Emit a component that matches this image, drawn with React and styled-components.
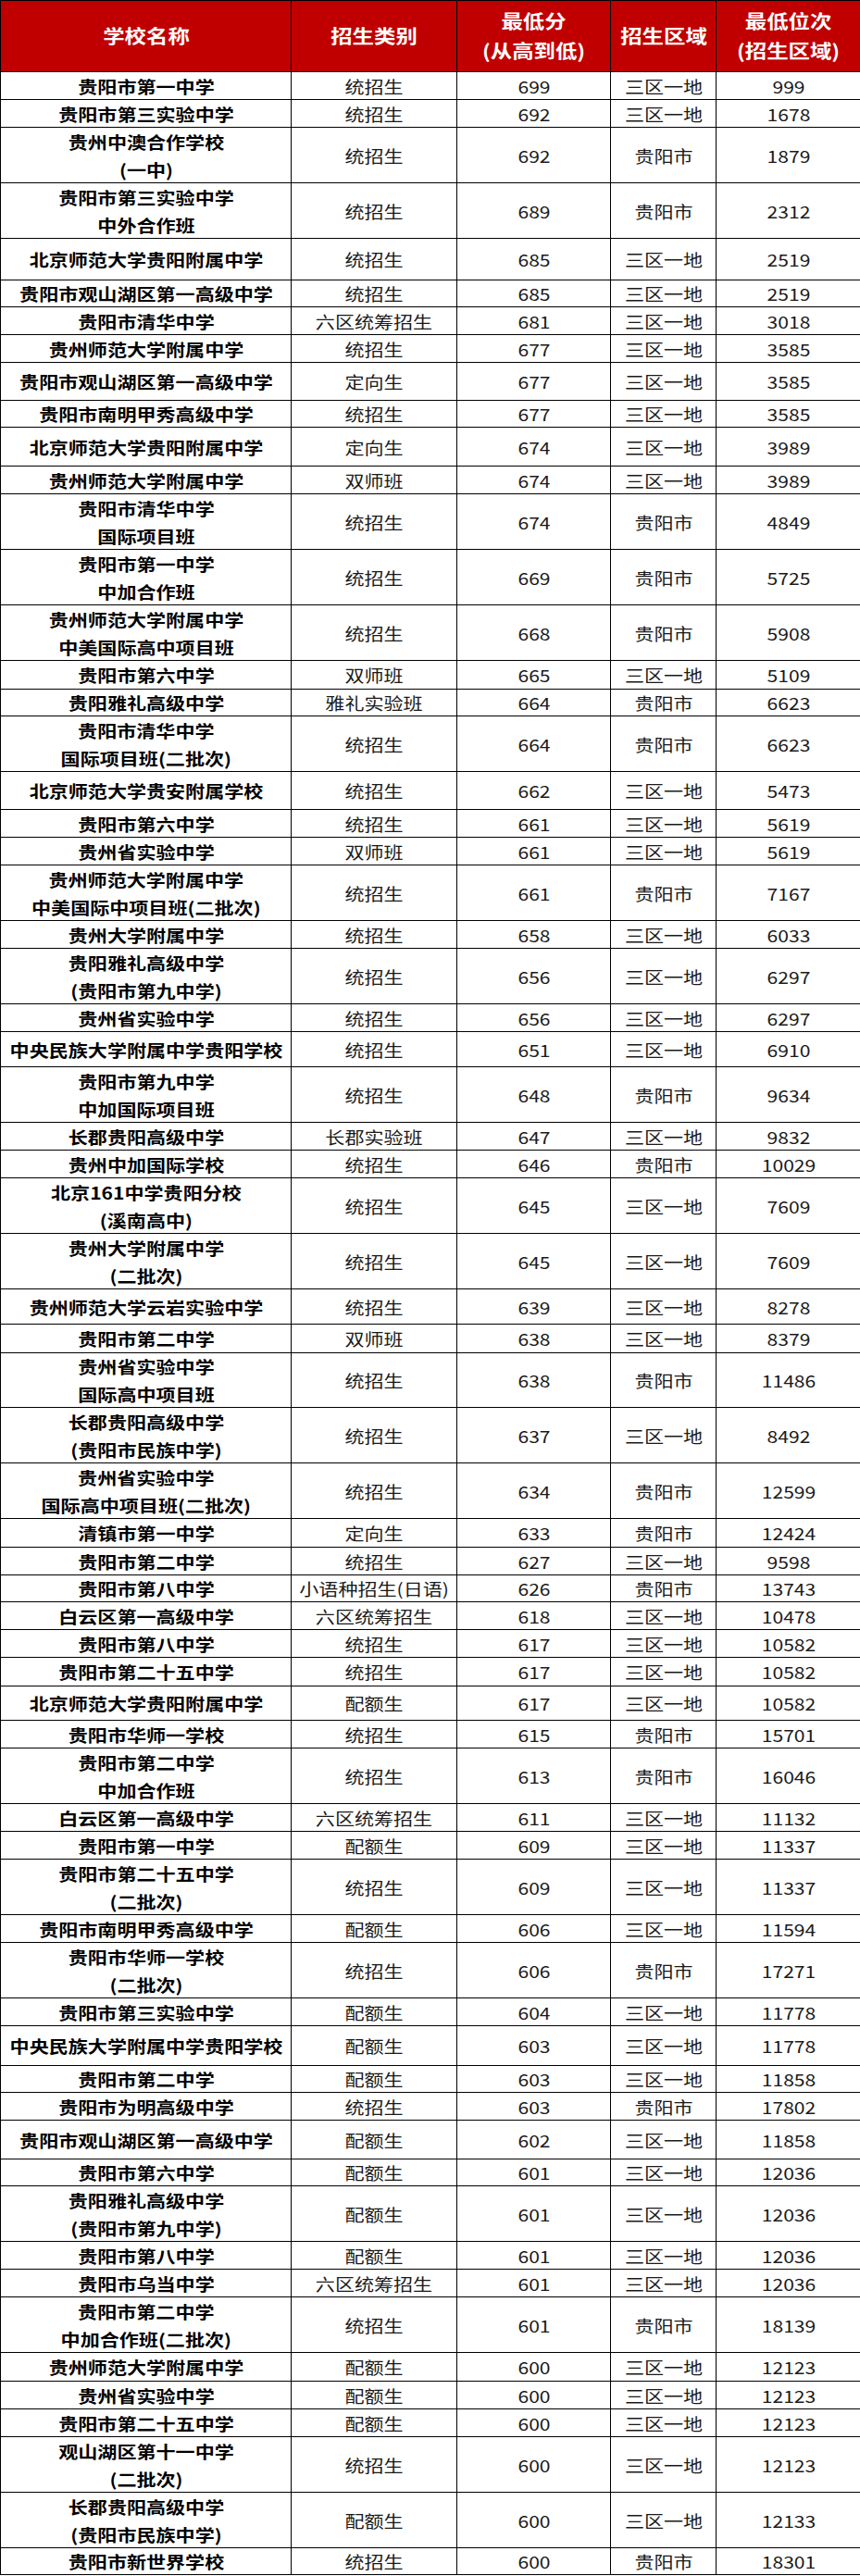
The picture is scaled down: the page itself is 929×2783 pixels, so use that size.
import React from 'react';
import styled, { createGlobalStyle } from 'styled-components';

const GlobalStyle = createGlobalStyle`
  html, body {
    margin: 0;
    padding: 0;
    background: #fff;
  }
  body {
    font-family: "Noto Sans CJK SC", "Noto Sans", sans-serif;
  }
`;

const COLUMNS = '314px 179px 166px 114px 156px';

const Table = styled.div`
  width: 929px;
  border-top: 1px solid #000;
  border-left: 1px solid #000;
  box-sizing: border-box;
`;

const Row = styled.div`
  display: grid;
  grid-template-columns: ${COLUMNS};
  height: ${props => props.h}px;
  box-sizing: border-box;
`;

const HeadRow = styled(Row)`
  background: #c00000;
`;

const Cell = styled.div`
  display: flex;
  align-items: center;
  justify-content: center;
  text-align: center;
  border-right: 1px solid #000;
  border-bottom: 1px solid #000;
  box-sizing: border-box;
  overflow: hidden;
`;

const HeadCell = styled(Cell)`
  color: #fff;
  font-weight: 700;
  font-size: 20px;
  line-height: 32px;
`;

const NameCell = styled(Cell)`
  color: #000;
  font-weight: 700;
  font-size: 18px;
  line-height: 30px;
`;

const ValueCell = styled(Cell)`
  color: #1a1a1a;
  font-weight: 400;
  font-size: 18px;
  line-height: 30px;
`;

const Stretch = styled.span`
  display: inline-block;
  white-space: pre-line;
  transform: scaleX(1.17);
  transform-origin: center;
`;

const rows = [
  ['贵阳市第一中学', '统招生', '699', '三区一地', '999', 30],
  ['贵阳市第三实验中学', '统招生', '692', '三区一地', '1678', 30],
  ['贵州中澳合作学校\n(一中)', '统招生', '692', '贵阳市', '1879', 60],
  ['贵阳市第三实验中学\n中外合作班', '统招生', '689', '贵阳市', '2312', 60],
  ['北京师范大学贵阳附属中学', '统招生', '685', '三区一地', '2519', 45],
  ['贵阳市观山湖区第一高级中学', '统招生', '685', '三区一地', '2519', 29],
  ['贵阳市清华中学', '六区统筹招生', '681', '三区一地', '3018', 30],
  ['贵州师范大学附属中学', '统招生', '677', '三区一地', '3585', 30],
  ['贵阳市观山湖区第一高级中学', '定向生', '677', '三区一地', '3585', 41],
  ['贵阳市南明甲秀高级中学', '统招生', '677', '三区一地', '3585', 29],
  ['北京师范大学贵阳附属中学', '定向生', '674', '三区一地', '3989', 42],
  ['贵州师范大学附属中学', '双师班', '674', '三区一地', '3989', 30],
  ['贵阳市清华中学\n国际项目班', '统招生', '674', '贵阳市', '4849', 60],
  ['贵阳市第一中学\n中加合作班', '统招生', '669', '贵阳市', '5725', 60],
  ['贵州师范大学附属中学\n中美国际高中项目班', '统招生', '668', '贵阳市', '5908', 60],
  ['贵阳市第六中学', '双师班', '665', '三区一地', '5109', 31],
  ['贵阳雅礼高级中学', '雅礼实验班', '664', '贵阳市', '6623', 29],
  ['贵阳市清华中学\n国际项目班(二批次)', '统招生', '664', '贵阳市', '6623', 60],
  ['北京师范大学贵安附属学校', '统招生', '662', '三区一地', '5473', 41],
  ['贵阳市第六中学', '统招生', '661', '三区一地', '5619', 30],
  ['贵州省实验中学', '双师班', '661', '三区一地', '5619', 30],
  ['贵州师范大学附属中学\n中美国际中项目班(二批次)', '统招生', '661', '贵阳市', '7167', 60],
  ['贵州大学附属中学', '统招生', '658', '三区一地', '6033', 30],
  ['贵阳雅礼高级中学\n(贵阳市第九中学)', '统招生', '656', '三区一地', '6297', 60],
  ['贵州省实验中学', '统招生', '656', '三区一地', '6297', 30],
  ['中央民族大学附属中学贵阳学校', '统招生', '651', '三区一地', '6910', 38],
  ['贵阳市第九中学\n中加国际项目班', '统招生', '648', '贵阳市', '9634', 60],
  ['长郡贵阳高级中学', '长郡实验班', '647', '三区一地', '9832', 30],
  ['贵州中加国际学校', '统招生', '646', '贵阳市', '10029', 30],
  ['北京161中学贵阳分校\n(溪南高中)', '统招生', '645', '三区一地', '7609', 60],
  ['贵州大学附属中学\n(二批次)', '统招生', '645', '三区一地', '7609', 60],
  ['贵州师范大学云岩实验中学', '统招生', '639', '三区一地', '8278', 38],
  ['贵阳市第二中学', '双师班', '638', '三区一地', '8379', 31],
  ['贵州省实验中学\n国际高中项目班', '统招生', '638', '贵阳市', '11486', 59],
  ['长郡贵阳高级中学\n(贵阳市民族中学)', '统招生', '637', '三区一地', '8492', 60],
  ['贵州省实验中学\n国际高中项目班(二批次)', '统招生', '634', '贵阳市', '12599', 60],
  ['清镇市第一中学', '定向生', '633', '贵阳市', '12424', 31],
  ['贵阳市第二中学', '统招生', '627', '三区一地', '9598', 30],
  ['贵阳市第八中学', '小语种招生(日语)', '626', '贵阳市', '13743', 29],
  ['白云区第一高级中学', '六区统筹招生', '618', '三区一地', '10478', 30],
  ['贵阳市第八中学', '统招生', '617', '三区一地', '10582', 30],
  ['贵阳市第二十五中学', '统招生', '617', '三区一地', '10582', 31],
  ['北京师范大学贵阳附属中学', '配额生', '617', '三区一地', '10582', 37],
  ['贵阳市华师一学校', '统招生', '615', '贵阳市', '15701', 30],
  ['贵阳市第二中学\n中加合作班', '统招生', '613', '贵阳市', '16046', 60],
  ['白云区第一高级中学', '六区统筹招生', '611', '三区一地', '11132', 30],
  ['贵阳市第一中学', '配额生', '609', '三区一地', '11337', 30],
  ['贵阳市第二十五中学\n(二批次)', '统招生', '609', '三区一地', '11337', 60],
  ['贵阳市南明甲秀高级中学', '配额生', '606', '三区一地', '11594', 30],
  ['贵阳市华师一学校\n(二批次)', '统招生', '606', '贵阳市', '17271', 60],
  ['贵阳市第三实验中学', '配额生', '604', '三区一地', '11778', 30],
  ['中央民族大学附属中学贵阳学校', '配额生', '603', '三区一地', '11778', 43],
  ['贵阳市第二中学', '配额生', '603', '三区一地', '11858', 29],
  ['贵阳市为明高级中学', '统招生', '603', '贵阳市', '17802', 30],
  ['贵阳市观山湖区第一高级中学', '配额生', '602', '三区一地', '11858', 42],
  ['贵阳市第六中学', '配额生', '601', '三区一地', '12036', 29],
  ['贵阳雅礼高级中学\n(贵阳市第九中学)', '配额生', '601', '三区一地', '12036', 60],
  ['贵阳市第八中学', '配额生', '601', '三区一地', '12036', 30],
  ['贵阳市乌当中学', '六区统筹招生', '601', '三区一地', '12036', 30],
  ['贵阳市第二中学\n中加合作班(二批次)', '统招生', '601', '贵阳市', '18139', 60],
  ['贵州师范大学附属中学', '配额生', '600', '三区一地', '12123', 31],
  ['贵州省实验中学', '配额生', '600', '三区一地', '12123', 30],
  ['贵阳市第二十五中学', '配额生', '600', '三区一地', '12123', 30],
  ['观山湖区第十一中学\n(二批次)', '统招生', '600', '三区一地', '12123', 60],
  ['长郡贵阳高级中学\n(贵阳市民族中学)', '配额生', '600', '三区一地', '12133', 60],
  ['贵阳市新世界学校', '统招生', '600', '贵阳市', '18301', 29],
];

const headers = ['学校名称', '招生类别', '最低分\n(从高到低)', '招生区域', '最低位次\n(招生区域)'];

export default function App() {
  return (
    <>
      <GlobalStyle />
      <Table>
        <HeadRow h={77}>
          {headers.map(text => (
            <HeadCell key={text}>
              <Stretch>{text}</Stretch>
            </HeadCell>
          ))}
        </HeadRow>
        {rows.map(([name, type, score, region, rank, h], i) => (
          <Row key={i} h={h}>
            <NameCell><Stretch>{name}</Stretch></NameCell>
            <ValueCell><Stretch>{type}</Stretch></ValueCell>
            <ValueCell><Stretch>{score}</Stretch></ValueCell>
            <ValueCell><Stretch>{region}</Stretch></ValueCell>
            <ValueCell><Stretch>{rank}</Stretch></ValueCell>
          </Row>
        ))}
      </Table>
    </>
  );
}
